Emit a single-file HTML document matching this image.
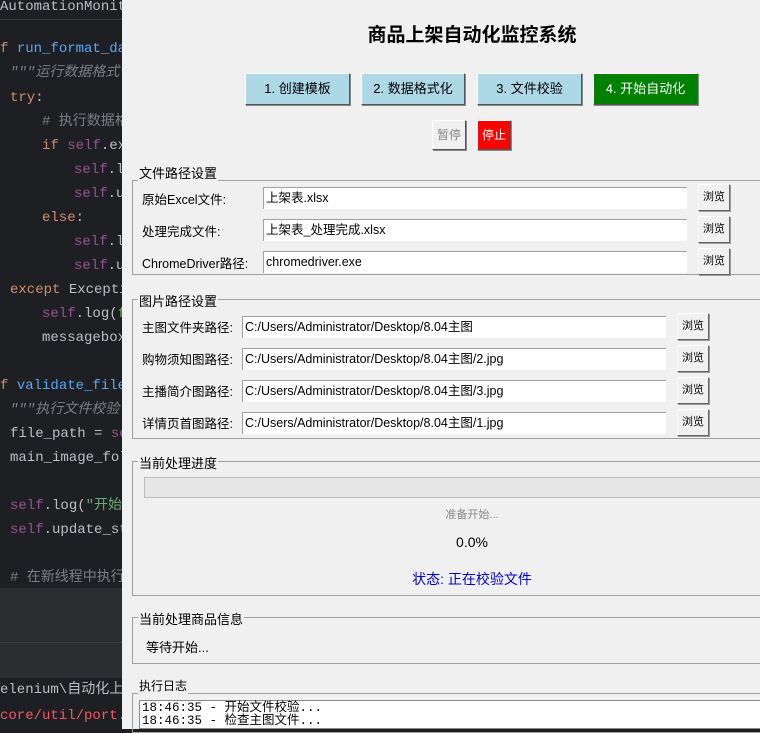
<!DOCTYPE html>
<html><head><meta charset="utf-8"><style>
*{margin:0;padding:0;box-sizing:border-box}
body{width:760px;height:729px;overflow:hidden;position:relative;background:#1e1f22;font-family:"Liberation Sans","Microsoft YaHei","Noto Sans CJK SC",sans-serif}
.code{position:absolute;left:0;top:0;width:122px;height:729px;background:#1e1f22;font-family:"Liberation Mono","Noto Sans CJK SC",monospace;font-size:14px;color:#bcbec4;white-space:pre;overflow:hidden}
.code div{position:absolute;left:0;line-height:18px}
.k{color:#cf8e6d}.f{color:#56a8f5}.s{color:#94558d}.c{color:#7a7e85;font-style:italic}.g{color:#6aab73}.r{color:#f75464}
.win{position:absolute;left:122px;top:0;width:638px;height:729px;background:#f0f0f0;color:#000;font-size:12px}
.a{position:absolute}
.ctr{position:absolute;left:150px;width:400px;text-align:center}
.btn{position:absolute;background:#add8e6;border:1px solid #fff;border-right-color:#555;border-bottom-color:#555;box-shadow:1px 1px 0 #888;text-align:center;font-size:13px}
.fr{position:absolute;border:1px solid #a0a0a0;border-right:none}
.lab{position:absolute;background:#f0f0f0;font-size:13px;padding:0 1px}
.ent{position:absolute;background:#fff;border-top:1px solid #a0a0a0;border-left:1px solid #a0a0a0;height:22px;line-height:21px;padding-left:2px;font-size:12.5px}
.br{position:absolute;width:32px;height:27px;background:#f0f0f0;border:1px solid #fff;border-right-color:#666;border-bottom-color:#666;box-shadow:1px 1px 0 #999;font-size:11px;text-align:center;line-height:25px}
.rl{position:absolute;font-size:12.5px}
</style></head><body>
<div class="code">
<div style="top:-2px;left:0;color:#bcbec4">AutomationMonitor</div>
<div style="top:0;left:0;top:19px;width:122px;height:1px;background:#393b40"></div>
<div style="top:40px"><span class="k">f</span> <span class="f">run_format_data</span></div>
<div style="top:64px;left:10px" class="g"><span class="c">"""运行数据格式化</span></div>
<div style="top:89px;left:10px"><span class="k">try</span>:</div>
<div style="top:113px;left:42px"><span class="c" style="font-style:normal"># 执行数据格式</span></div>
<div style="top:137px;left:42px"><span class="k">if</span> <span class="s">self</span>.exce</div>
<div style="top:161px;left:74px"><span class="s">self</span>.lo</div>
<div style="top:185px;left:74px"><span class="s">self</span>.up</div>
<div style="top:209px;left:42px"><span class="k">else</span>:</div>
<div style="top:233px;left:74px"><span class="s">self</span>.lo</div>
<div style="top:257px;left:74px"><span class="s">self</span>.up</div>
<div style="top:281px;left:10px"><span class="k">except</span> Exception</div>
<div style="top:305px;left:42px"><span class="s">self</span>.log(<span class="g">f</span></div>
<div style="top:329px;left:42px">messagebox.</div>
<div style="top:377px;left:0"><span class="k">f</span> <span class="f">validate_file</span>(</div>
<div style="top:401px;left:10px"><span class="c">"""执行文件校验"</span></div>
<div style="top:425px;left:10px">file_path = <span class="s">sel</span></div>
<div style="top:449px;left:10px">main_image_fold</div>
<div style="top:497px;left:10px"><span class="s">self</span>.log(<span class="g">"开始文</span></div>
<div style="top:521px;left:10px"><span class="s">self</span>.update_sta</div>
<div style="top:569px;left:10px"><span class="c" style="font-style:normal"># 在新线程中执行</span></div>
<div style="top:588px;left:0;width:122px;height:90px;background:#2b2d30"></div>
<div style="top:642px;left:0;width:122px;height:1px;background:#393b40"></div>
<div style="top:681px;left:0">elenium\自动化上架</div>
<div style="top:707px;left:0" class="r">core/util/port.c</div>
</div>
<div class="win">
<div class="ctr" style="top:20px;font-size:19px;font-weight:bold">商品上架自动化监控系统</div>
<div class="btn" style="left:123px;top:73px;width:105px;height:32px;line-height:30px">1. 创建模板</div>
<div class="btn" style="left:239px;top:73px;width:104px;height:32px;line-height:30px">2. 数据格式化</div>
<div class="btn" style="left:355px;top:73px;width:105px;height:32px;line-height:30px">3. 文件校验</div>
<div class="btn" style="left:471px;top:73px;width:105px;height:32px;line-height:30px;background:#008000;color:#fff">4. 开始自动化</div>
<div class="btn" style="left:310px;top:120px;width:34px;height:30px;line-height:28px;background:#f0f0f0;color:#888;font-size:12px">暂停</div>
<div class="btn" style="left:355px;top:120px;width:34px;height:30px;line-height:28px;background:#f00;color:#fff;font-size:12px">停止</div>

<div class="fr" style="left:10px;top:180px;width:628px;height:95px"></div>
<div class="lab" style="left:16px;top:163px">文件路径设置</div>
<div class="rl" style="left:20px;top:189px">原始Excel文件:</div>
<div class="ent" style="left:141px;top:187px;width:424px">上架表.xlsx</div>
<div class="br" style="left:576px;top:184px">浏览</div>
<div class="rl" style="left:20px;top:221px">处理完成文件:</div>
<div class="ent" style="left:141px;top:219px;width:424px">上架表_处理完成.xlsx</div>
<div class="br" style="left:576px;top:216px">浏览</div>
<div class="rl" style="left:20px;top:253px">ChromeDriver路径:</div>
<div class="ent" style="left:141px;top:251px;width:424px">chromedriver.exe</div>
<div class="br" style="left:576px;top:248px">浏览</div>

<div class="fr" style="left:10px;top:299px;width:628px;height:140px"></div>
<div class="lab" style="left:16px;top:291px">图片路径设置</div>
<div class="rl" style="left:20px;top:317px">主图文件夹路径:</div>
<div class="ent" style="left:120px;top:316px;width:424px">C:/Users/Administrator/Desktop/8.04主图</div>
<div class="br" style="left:555px;top:313px">浏览</div>
<div class="rl" style="left:20px;top:349px">购物须知图路径:</div>
<div class="ent" style="left:120px;top:348px;width:424px">C:/Users/Administrator/Desktop/8.04主图/2.jpg</div>
<div class="br" style="left:555px;top:345px">浏览</div>
<div class="rl" style="left:20px;top:381px">主播简介图路径:</div>
<div class="ent" style="left:120px;top:380px;width:424px">C:/Users/Administrator/Desktop/8.04主图/3.jpg</div>
<div class="br" style="left:555px;top:377px">浏览</div>
<div class="rl" style="left:20px;top:413px">详情页首图路径:</div>
<div class="ent" style="left:120px;top:412px;width:424px">C:/Users/Administrator/Desktop/8.04主图/1.jpg</div>
<div class="br" style="left:555px;top:409px">浏览</div>

<div class="fr" style="left:10px;top:461px;width:628px;height:135px"></div>
<div class="lab" style="left:16px;top:453px">当前处理进度</div>
<div class="a" style="left:22px;top:477px;width:616px;height:21px;background:#e6e6e6;border:1px solid #bcbcbc;border-right:none"></div>
<div class="ctr" style="top:506px;color:#888;font-size:11px">准备开始...</div>
<div class="ctr" style="top:534px;font-size:14px">0.0%</div>
<div class="ctr" style="top:569px;font-size:14px;color:#0000cd">状态: 正在校验文件</div>

<div class="fr" style="left:10px;top:617px;width:628px;height:47px"></div>
<div class="lab" style="left:16px;top:609px">当前处理商品信息</div>
<div class="a" style="left:24px;top:637px;font-size:13px">等待开始...</div>

<div class="fr" style="left:10px;top:693px;width:628px;height:40px"></div>
<div class="lab" style="left:16px;top:677px;font-size:12px">执行日志</div>
<div class="a" style="left:17px;top:700px;width:621px;height:29px;background:#fff;border:1px solid #888;border-right:none;font-family:'Liberation Mono','Noto Sans CJK SC',monospace;font-size:12.5px;line-height:13px;padding-left:2px;padding-top:1px">18:46:35 - 开始文件校验...<br>18:46:35 - 检查主图文件...</div>
</div>
</body></html>
